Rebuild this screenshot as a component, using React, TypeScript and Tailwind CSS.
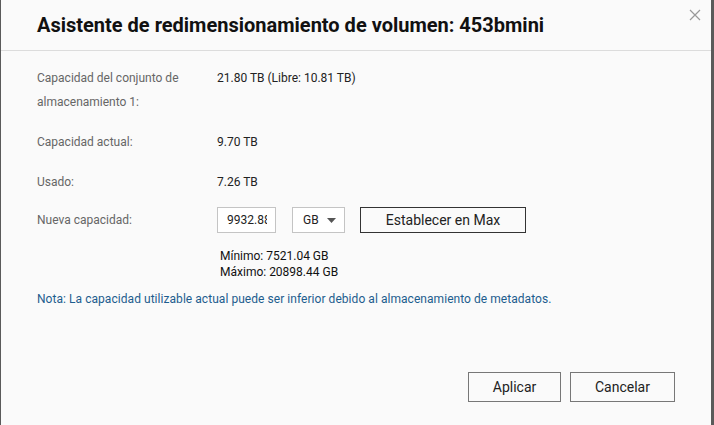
export default function App() {
  const rows = [
    { label: "Capacidad actual:", value: "9.70 TB" },
    { label: "Usado:", value: "7.26 TB" },
  ];

  return (
    <div className="flex h-[425px] w-[714px] bg-[#5a5a5a] font-['Roboto',sans-serif]">
      <div className="ml-px flex h-full w-[710px] flex-col bg-[#fafafa]">
        {/* header */}
        <div className="relative flex h-[51px] shrink-0 items-center border-b border-[#dcdcdc] pl-[36px]">
          <h1 className="text-[20px] font-bold text-[#111]">
            Asistente de redimensionamiento de volumen: 453bmini
          </h1>
          <button className="absolute right-[10px] top-[9px] text-[#999]">
            <svg width="12" height="12" viewBox="0 0 12 12" stroke="currentColor" strokeWidth="1.2">
              <path d="M1 1L11 11M11 1L1 11" />
            </svg>
          </button>
        </div>

        {/* body */}
        <div className="flex flex-1 flex-col pl-[36px] pt-[15px] text-[12px]">
          <div className="flex leading-[24px]">
            <div className="w-[180px] text-[#666]">
              Capacidad del conjunto de
              <br />
              almacenamiento 1:
            </div>
            <div className="text-[#222]">21.80 TB (Libre: 10.81 TB)</div>
          </div>

          {rows.map((r) => (
            <div key={r.label} className="mt-[16px] flex leading-[24px]">
              <div className="w-[180px] text-[#666]">{r.label}</div>
              <div className="text-[#222]">{r.value}</div>
            </div>
          ))}

          <div className="mt-[13px] flex items-center">
            <div className="w-[180px] text-[#666]">Nueva capacidad:</div>
            <div className="flex h-[26px] w-[59px] items-center overflow-hidden border border-[#c4c4c4] bg-white pl-[9px] text-[12px] text-[#222]">
              <span className="whitespace-nowrap">9932.8</span>
              <span className="inline-block w-[3px] overflow-hidden">8</span>
            </div>
            <div className="ml-[16px] flex h-[26px] w-[53px] items-center justify-between border border-[#c4c4c4] bg-white pl-[10px] pr-[8px] text-[12px] text-[#222]">
              <span>GB</span>
              <svg width="9" height="5" viewBox="0 0 9 5">
                <path d="M0 0H9L4.5 5Z" fill="#555" />
              </svg>
            </div>
            <button className="ml-[15px] h-[26px] w-[166px] border border-[#333] bg-[#fafafa] text-[14px] text-[#222]">
              Establecer en Max
            </button>
          </div>

          <div className="mt-[15px] pl-[183px] text-[12px] leading-[16px] text-[#111]">
            <div>Mínimo: 7521.04 GB</div>
            <div>Máximo: 20898.44 GB</div>
          </div>

          <div className="mt-[10px] text-[12px] tracking-[0.05px] text-[#1d5d8e]">
            Nota: La capacidad utilizable actual puede ser inferior debido al almacenamiento de metadatos.
          </div>
        </div>

        {/* footer */}
        <div className="flex justify-end gap-[9px] pb-[23px] pr-[36px]">
          <button className="h-[30px] w-[93px] border border-[#777] bg-[#fafafa] text-[14px] text-[#222]">
            Aplicar
          </button>
          <button className="h-[30px] w-[105px] border border-[#777] bg-[#fafafa] text-[14px] text-[#222]">
            Cancelar
          </button>
        </div>
      </div>
    </div>
  );
}
